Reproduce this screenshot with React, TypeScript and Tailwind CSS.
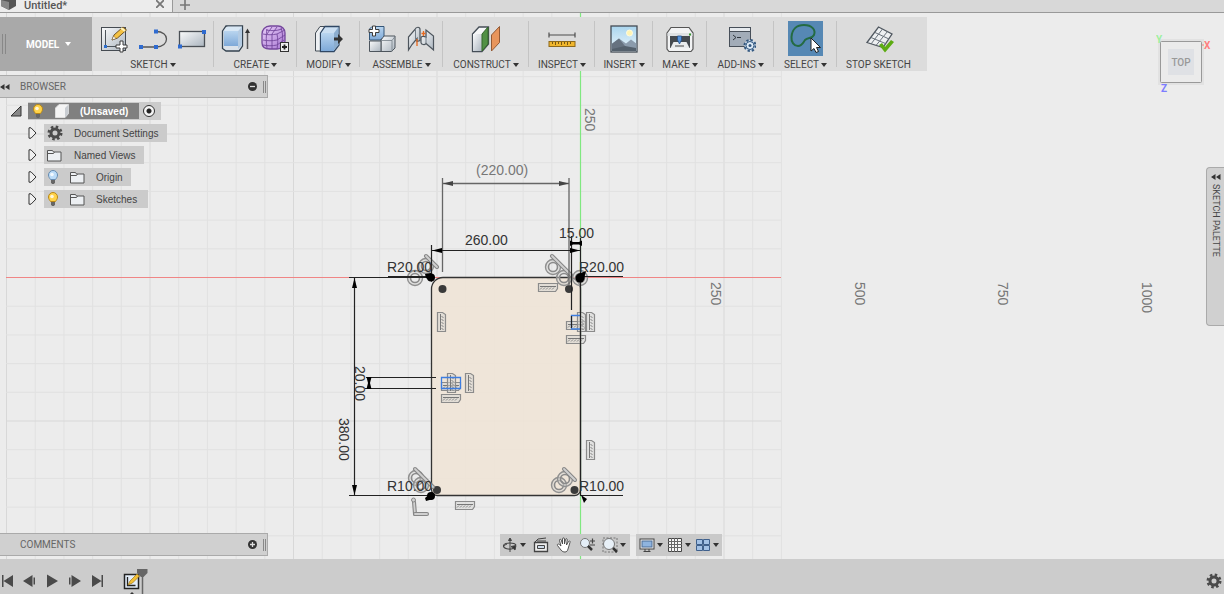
import type { ReactNode } from "react";

/* ---------- Toolbar icons (30 x 30) ---------- */

function Icon({ children }: { children: ReactNode }) {
  return (
    <svg viewBox="0 0 30 30" className="h-[30px] w-[30px] shrink-0" fill="none" aria-hidden="true">
      {children}
    </svg>
  );
}

function Shades() {
  return (
    <svg className="absolute h-0 w-0" aria-hidden="true">
      <defs>
        <linearGradient id="steel" x1="0" y1="0" x2="1" y2="1">
          <stop offset="0" stopColor="#fafbfc" />
          <stop offset="1" stopColor="#abb5bf" />
        </linearGradient>
        <linearGradient id="blue" x1="0" y1="0" x2="0" y2="1">
          <stop offset="0" stopColor="#b9d5ef" />
          <stop offset="1" stopColor="#7ea9d8" />
        </linearGradient>
        <linearGradient id="sky" x1="0" y1="0" x2="0" y2="1">
          <stop offset="0" stopColor="#a9d5ee" />
          <stop offset="1" stopColor="#edf6fb" />
        </linearGradient>
        <linearGradient id="purple" x1="0" y1="0" x2="1" y2="1">
          <stop offset="0" stopColor="#e7cdf8" />
          <stop offset="1" stopColor="#a978d3" />
        </linearGradient>
      </defs>
    </svg>
  );
}

function CreateSketchIcon() {
  return (
    <Icon>
      <rect x="2.500" y="3.500" width="24" height="23" fill="url(#steel)" stroke="#454b52" />
      <path d="M6.500 6v16.500h15" stroke="#4c535a" />
      <rect x="5" y="21" width="3" height="3" fill="#2e6fce" />
      <path d="M13 16l2-5 9-8 3.500 3-9 8z" fill="#f5c243" stroke="#70552a" />
      <path d="M13 16l1.500-4 2.500 2.500z" fill="#fff" stroke="#70552a" strokeWidth="0.500" />
      <path d="M22 4l4 3" stroke="#fff3bd" strokeWidth="2" />
      <path d="M21 17h3v4h4v3h-4v4h-3v-4h-4v-3h4z" fill="#fff" stroke="#3c3c3c" />
    </Icon>
  );
}

function LineIcon() {
  return (
    <Icon>
      <path d="M3 23h15c7 0 10.500-4 10.500-8S25 7.500 18 7.500" stroke="#555" strokeWidth="1.300" />
      <rect x="1" y="21" width="4" height="4" fill="#2f6bd0" />
      <rect x="16" y="21" width="4" height="4" fill="#2f6bd0" />
      <rect x="16" y="5.500" width="4" height="4" fill="#2f6bd0" />
    </Icon>
  );
}

function RectangleIcon() {
  return (
    <Icon>
      <rect x="2.500" y="7.500" width="25" height="15" fill="url(#steel)" stroke="#4a4f55" strokeWidth="1.300" />
      <rect x="1" y="20.500" width="4" height="4" fill="#2f6bd0" />
      <rect x="25" y="6" width="4" height="4" fill="#2f6bd0" />
    </Icon>
  );
}

function ExtrudeIcon() {
  return (
    <Icon>
      <path d="M1.500 7L5 2h16.500v20l-3.500 5H5l-3.500-2.500z" fill="#dce3ea" stroke="#33424f" strokeWidth="1.300" />
      <path d="M3 7h14v15H3z" fill="url(#blue)" />
      <path d="M17 7l4-4.500V21l-4 4z" fill="#b4cbe2" />
      <path d="M3 7l3.500-4.500H21L17 7z" fill="#d9e8f5" />
      <path d="M26.500 25V8" stroke="#555" strokeWidth="1.500" />
      <path d="M24 9l2.500-4.500L29 9z" fill="#333" />
    </Icon>
  );
}

function FormIcon() {
  return (
    <Icon>
      <path d="M2 10c0-4 3-8 8-8h8c4 0 7 3 7 7v8c0 5-4 8-8 8h-7c-5 0-8-2-8-6z" fill="url(#purple)" stroke="#74479c" strokeWidth="1.300" />
      <path d="M3 10c5 1 9 1 14 0l8-4M3 16c5 1 9 1 14 0l8-5M3 21c5 1 9 1 14 0l7-5M7 5c-1 6-1 13 0 19M12 10v15M17 10c1 5 1 10 0 15M21 4c2 5 2 11 0 18M6 6c6 1 10 1 16-1M12 10l5-7M7 10l5-7" stroke="#74479c" strokeWidth="0.900" />
      <rect x="20.500" y="18.500" width="8" height="9" fill="#eee" stroke="#333" />
      <path d="M24.500 20.500v5M22 23h5" stroke="#222" strokeWidth="1.800" />
    </Icon>
  );
}

function PressPullIcon() {
  return (
    <Icon>
      <path d="M1.500 9L6 2.500h6L7 9v18H1.500z" fill="#edf0f3" stroke="#454e57" />
      <path d="M6.500 9L11 2.500h14V21l-5 6.500H6.500z" fill="#cbdff2" stroke="#2f4764" strokeWidth="1.300" />
      <path d="M7 9h13v18H7z" fill="url(#blue)" />
      <path d="M20 9l4.500-6v18L20 26z" fill="#8caed0" />
      <path d="M20 13.500h4v-3.500l5 5-5 5v-3.500h-4z" fill="#333" />
    </Icon>
  );
}

function NewComponentIcon() {
  return (
    <Icon>
      <path d="M2.500 5L5 2.500h12V15h-3v1H2.500z" fill="url(#blue)" stroke="#345678" />
      <path d="M14 16l3-4h11v12l-3.500 3.500H14z" fill="url(#steel)" stroke="#4d555d" />
      <path d="M2.500 17h11.500v10.500H2.500z" fill="url(#steel)" stroke="#4d555d" />
      <path d="M14 16.500h11l3-4M25 16.500v11" stroke="#737d87" strokeWidth="0.800" />
      <path d="M5.500 2h3v3.500H12v3H8.500V12h-3V8.500H2v-3h3.500z" fill="#fff" stroke="#3c3c3c" />
    </Icon>
  );
}

function JointIcon() {
  return (
    <Icon>
      <path d="M2.500 13L9 5.500c1-3 5-3 5 0v11l-3 1v-3l-5 6-3.500 5.500z" fill="url(#steel)" stroke="#4d555d" strokeWidth="1.200" />
      <path d="M15 14c0-2 3-2 5-1V6l7.500 6v14L20 19.500c-1 2-5 1-5-1z" fill="url(#steel)" stroke="#4d555d" strokeWidth="1.200" />
      <path d="M9.500 6v9M20 7v12" stroke="#737d87" />
      <path d="M11 15v7M17.500 7v5M15.500 9.500h4" stroke="#e8681e" strokeWidth="1.300" />
    </Icon>
  );
}

function PlaneIcon() {
  return (
    <Icon>
      <path d="M1.500 10L8 3h9.500v17L11 27.500H1.500z" fill="#f6f7f8" stroke="#454e57" strokeWidth="1.300" />
      <path d="M2 10h9v17H2z" fill="url(#steel)" />
      <path d="M11 10l6-7v17l-6 7z" fill="#519044" stroke="#34662b" />
      <path d="M20.500 11l8-8.500v16l-8 8.500z" fill="#e8955c" stroke="#945a35" />
    </Icon>
  );
}

function MeasureIcon() {
  return (
    <Icon>
      <path d="M2 11h26M2 8.500v5M28 8.500v5" stroke="#4d4d4d" strokeWidth="1.200" />
      <rect x="2" y="17.500" width="26" height="5" fill="#f0b62d" stroke="#8d691b" />
      <path d="M5.500 18v2M8.500 18v3M11.500 18v2M14.500 18v3M17.500 18v2M20.500 18v3M23.500 18v2" stroke="#785812" />
    </Icon>
  );
}

function PictureIcon() {
  return (
    <Icon>
      <rect x="2" y="2" width="26" height="26" fill="url(#sky)" stroke="#444c55" strokeWidth="1.300" />
      <circle cx="20.500" cy="9" r="3" fill="#fff4b3" stroke="#fffbe0" />
      <path d="M2.700 20L10 14.500l7 5 5-4 5.300 4V27H2.700z" fill="#8b9bac" />
      <path d="M2.700 20L10 14.500l10 12.500H2.700z" fill="#667280" />
      <path d="M3 25l13-3 11 2v3H3z" fill="#54606c" />
    </Icon>
  );
}

function PrinterIcon() {
  return (
    <Icon>
      <path d="M2 9l4-5.500h18L28 9v16l-2 2.500H4L2 25z" fill="#f2f3f4" stroke="#555" strokeWidth="1.200" />
      <path d="M2.500 9h25v3h-25z" fill="#dfe2e4" />
      <rect x="5" y="12" width="20" height="12" fill="#444a50" />
      <path d="M8.500 18h13l3 6H5.500z" fill="#e9ecee" />
      <path d="M12.500 12h4v4l-2 4-2-4z" fill="#5694dc" stroke="#234f88" strokeWidth="0.800" />
      <path d="M10 22h9" stroke="#444" />
      <path d="M24 10.500h2" stroke="#3c9b32" strokeWidth="2" />
    </Icon>
  );
}

function ScriptIcon() {
  return (
    <Icon>
      <rect x="3.500" y="3.500" width="21" height="19" fill="#a2acb8" stroke="#474f59" />
      <path d="M4 4h20v3H4z" fill="#e6eaee" />
      <path d="M4 7.500h20" stroke="#474f59" />
      <path d="M7 11l3 2.500L7 16M11 13.500h4" stroke="#303840" />
      <circle cx="24" cy="21.500" r="5.500" fill="#cfe0f2" stroke="#32577f" strokeWidth="2" strokeDasharray="2.300 2" />
      <circle cx="24" cy="21.500" r="4" fill="#deebf7" stroke="#32577f" />
      <circle cx="24" cy="21.500" r="1.500" fill="#32577f" />
    </Icon>
  );
}

function SelectIcon() {
  return (
    <svg viewBox="0 0 35 35" className="h-[35px] w-[35px]" fill="none" aria-hidden="true">
      <path d="M3.500 16C4 8 9 4 16 4c8 0 12 5 10 10-2 4-6 2-9 5-2 3-3 6-7 6s-7-4-6.500-9z" stroke="#246b42" strokeWidth="2" />
      <path d="M23 17v13l3-2.500 2 4 2.500-1-2-4h4z" fill="#fff" stroke="#222" />
    </svg>
  );
}

function StopSketchIcon() {
  return (
    <Icon>
      <path d="M3 18.500L14.500 3 28 10 19 23.500z" fill="#eef0f2" stroke="#505860" strokeWidth="1.300" />
      <path d="M7 20L18.500 5M12 21.500L23.500 7.500M7 13.500l14.500 6M11 8.500l14 6.500" stroke="#69727b" />
      <path d="M15 21l3-2 3 4 6-7 3 2-9 10.500z" fill="#5cab12" />
    </Icon>
  );
}

/* ---------- Toolbar ---------- */

const GROUPS: { label: string; width: string; menu: boolean; icons: ReactNode[] }[] = [
  { label: "SKETCH", width: "w-[122px]", menu: true, icons: [<CreateSketchIcon />, <LineIcon />, <RectangleIcon />] },
  { label: "CREATE", width: "w-[83px]", menu: true, icons: [<ExtrudeIcon />, <FormIcon />] },
  { label: "MODIFY", width: "w-[63px]", menu: true, icons: [<PressPullIcon />] },
  { label: "ASSEMBLE", width: "w-[83px]", menu: true, icons: [<NewComponentIcon />, <JointIcon />] },
  { label: "CONSTRUCT", width: "w-[86px]", menu: true, icons: [<PlaneIcon />] },
  { label: "INSPECT", width: "w-[66px]", menu: true, icons: [<MeasureIcon />] },
  { label: "INSERT", width: "w-[58px]", menu: true, icons: [<PictureIcon />] },
  { label: "MAKE", width: "w-[54px]", menu: true, icons: [<PrinterIcon />] },
  { label: "ADD-INS", width: "w-[67px]", menu: true, icons: [<ScriptIcon />] },
  { label: "SELECT", width: "w-[63px]", menu: true, icons: [<SelectIcon />] },
  { label: "STOP SKETCH", width: "w-[83px]", menu: false, icons: [<StopSketchIcon />] },
];

function Caret({ light }: { light?: boolean }) {
  return (
    <svg viewBox="0 0 6 4" className="h-1 w-1.5 shrink-0" aria-hidden="true">
      <path d="M0 0h6L3 4z" fill={light ? "#fff" : "#333"} />
    </svg>
  );
}

function Toolbar() {
  return (
    <nav className="flex h-[54px] bg-[#dcdcdc] pr-[7px] font-[Roboto,sans-serif]" aria-label="Tools">
      <button className="flex w-[92px] items-center bg-[#a9a9a9] text-[10px] font-bold text-white">
        <span className="ml-[2px] h-5 w-1 border-x border-[#888]" />
        <span className="ml-5">MODEL</span>
        <span className="ml-1.5 flex">
          <Caret light />
        </span>
      </button>
      {GROUPS.map((group, i) => (
        <div key={group.label} className={`relative flex flex-col items-center pt-1 ${group.width}`}>
          <div className="flex h-[35px] items-center gap-[9px]">
            {group.icons.map((icon, n) => (
              <button
                key={n}
                aria-label={`${group.label} ${n + 1}`}
                className={group.label === "SELECT" ? "bg-[#5688b4]" : ""}
              >
                {icon}
              </button>
            ))}
          </div>
          <button className="mt-[3px] flex items-center gap-[2px] text-[10px] leading-3 whitespace-nowrap text-[#444]">
            {group.label}
            {group.menu && <Caret />}
          </button>
          {i < GROUPS.length - 1 && <span className="absolute top-1 right-0 h-[46px] w-px bg-[#c4c4c4]" />}
        </div>
      ))}
    </nav>
  );
}

/* ---------- Browser tree ---------- */

function Bulb({ on }: { on: boolean }) {
  return (
    <svg viewBox="0 0 12 14" className="h-3.5 w-3" aria-hidden="true">
      <path d="M3.500 9.500C2.500 8 1.500 7 1.500 5a4.500 4.500 0 019 0c0 2-1 3-2 4.500z" fill={on ? "#ffd34a" : "#bcdcf8"} stroke={on ? "#b98717" : "#668bb0"} />
      <circle cx="5" cy="4.500" r="1.800" fill="#fff" opacity="0.800" />
      <path d="M4 10h4v2.500L7 14H5l-1-1.500z" fill="#666" />
    </svg>
  );
}

function Folder() {
  return (
    <svg viewBox="0 0 15 13" className="h-[13px] w-[15px]" aria-hidden="true">
      <path d="M.5 12V1.500h5l1 1.500h7.500v9z" fill="#eceff2" stroke="#555" />
      <path d="M1 4.500h5.500l1-1.500" fill="none" stroke="#555" />
    </svg>
  );
}

function Gear() {
  return (
    <svg viewBox="0 0 16 16" className="h-4 w-4" fill="none" aria-hidden="true">
      <circle cx="8" cy="8" r="6" stroke="#4b4b4b" strokeWidth="3" strokeDasharray="2.400 2.310" />
      <circle cx="8" cy="8" r="4" stroke="#4b4b4b" strokeWidth="3" />
    </svg>
  );
}

function BodyIcon() {
  return (
    <svg viewBox="0 0 14 14" className="h-3.5 w-3.5" aria-hidden="true">
      <path d="M.5 4L4 .5h9.500v9L10 13.500H.5z" fill="#f4f4f4" stroke="#ddd" />
      <path d="M10 4l3.500-3.500v9L10 13.500z" fill="#c9cdd2" />
    </svg>
  );
}

const ROWS: { label: string; icons: ReactNode; gap: string }[] = [
  { label: "Document Settings", icons: <Gear />, gap: "gap-[11px] pr-2 pl-[3px]" },
  { label: "Named Views", icons: <Folder />, gap: "gap-[12px] pr-2 pl-[3px]" },
  { label: "Origin", icons: <><Bulb on={false} /><Folder /></>, gap: "gap-[11px] pr-2 pl-[3px]" },
  { label: "Sketches", icons: <><Bulb on /><Folder /></>, gap: "gap-[11px] pr-[11px] pl-[3px]" },
];

function PanelHeader({ title, collapse }: { title: string; collapse: boolean }) {
  return (
    <div className="flex h-[23px] w-[268px] items-center border border-l-0 border-[#aaa] bg-[#d0d0d0] pr-px font-[Roboto,sans-serif] text-[10px] text-[#666]">
      <span className="flex w-5">
        {collapse && (
          <svg viewBox="0 0 10 6" className="h-1.5 w-2.5" aria-hidden="true">
            <path d="M0 3l4.500-3v6zM5 3l4.500-3v6z" fill="#333" />
          </svg>
        )}
      </span>
      <h2>{title}</h2>
      <button className="ml-auto" aria-label={collapse ? "Collapse browser" : "Add comment"}>
        <svg viewBox="0 0 9 9" className="h-[9px] w-[9px]" aria-hidden="true">
          <circle cx="4.500" cy="4.500" r="4.500" fill="#333" />
          <path d={collapse ? "M2 4.500h5" : "M2 4.500h5M4.500 2v5"} stroke="#ddd" strokeWidth="1.300" />
        </svg>
      </button>
      <span className="ml-1.5 h-3 w-[3px] border-x border-[#888]" />
    </div>
  );
}

function Browser() {
  return (
    <section className="mt-1 text-[10px] text-[#444]">
      <PanelHeader title="BROWSER" collapse />
      <ul className="mt-1 flex flex-col gap-1">
        <li className="flex h-[18px] items-center pl-[10px]">
          <svg viewBox="0 0 12 12" className="h-3 w-3" aria-hidden="true">
            <path d="M1 11L11 1v10z" fill="#888" stroke="#333" />
          </svg>
          <div className="ml-1.5 flex h-[18px] items-center bg-[#cbcbcb] pr-1.5">
            <button className="flex h-4 items-center gap-[11px] bg-[#808080] pr-[11px] pl-1 font-bold text-white">
              <Bulb on />
              <BodyIcon />
              (Unsaved)
            </button>
            <input type="radio" name="active" defaultChecked aria-label="Activate component" className="ml-1 h-3 w-3 appearance-none rounded-full border border-[#333] bg-[radial-gradient(circle,#222_2px,#f4f4f4_3px)]" />
          </div>
        </li>
        {ROWS.map((row) => (
          <li key={row.label} className="flex h-[18px] items-center pl-7">
            <button aria-label={`Expand ${row.label}`}>
              <svg viewBox="0 0 9 12" className="h-3 w-[9px]" aria-hidden="true">
                <path d="M1 .8v10.400h2L8 6 3 .8z" fill="#f0f0f0" stroke="#333" />
              </svg>
            </button>
            <button className={`ml-[7px] flex h-[18px] items-center bg-[#cbcbcb] ${row.gap}`}>
              {row.icons}
              {row.label}
            </button>
          </li>
        ))}
      </ul>
    </section>
  );
}

/* ---------- Sketch canvas ---------- */

const STEP = 28.7;
const ORIGIN_X = 580.5;
const ORIGIN_Y = 277.5;

function Grid() {
  const columns = Array.from({ length: 28 }, (_, i) => i - 20);
  const rows = Array.from({ length: 20 }, (_, i) => i - 9);
  return (
    <g>
      {columns.map((n) => (
        <path key={n} d={`M${ORIGIN_X + n * STEP} 13V560`} stroke={n % 5 === 0 ? "#d8d8d8" : "#e1e1e1"} />
      ))}
      {rows.map((n) => (
        <path key={n} d={`M6 ${ORIGIN_Y + n * STEP}H781`} stroke={n % 5 === 0 ? "#d8d8d8" : "#e1e1e1"} />
      ))}
    </g>
  );
}

// Horizontal / vertical constraint glyph
function Comb({ x, y, vertical }: { x: number; y: number; vertical?: boolean }) {
  return (
    <g transform={vertical ? `translate(${x} ${y + 20}) rotate(-90)` : `translate(${x} ${y})`} fill="none">
      <path d="M.5.500h19v5l-2 3H.5z" fill="#d6d6d3" fillOpacity="0.500" stroke="#8b8b8b" strokeWidth="1.200" />
      <path d="M2 3.500h16" stroke="#777" />
      <path d="M4 4.500l-2 2M7 4.500l-2 2M10 4.500l-2 2M13 4.500l-2 2M16 4.500l-2 2" stroke="#858585" />
    </g>
  );
}

// Tangent constraint glyph
function Ring({ x, y }: { x: number; y: number }) {
  return (
    <g fill="none">
      <circle cx={x} cy={y} r="6" stroke="#d4d4d2" strokeWidth="3" opacity="0.500" />
      <circle cx={x} cy={y} r="7.500" stroke="#8f8f8f" strokeWidth="1.400" />
      <circle cx={x} cy={y} r="4.500" stroke="#8a8a8a" strokeWidth="1.600" />
    </g>
  );
}

function Bar({ d }: { d: string }) {
  return (
    <g fill="none" strokeLinecap="round">
      <path d={d} stroke="#868686" strokeWidth="4" />
      <path d={d} stroke="#d0d0d0" strokeWidth="1.800" />
    </g>
  );
}

const RULER = [
  { value: "250", x: 711, y: 282 },
  { value: "500", x: 855, y: 282 },
  { value: "750", x: 998, y: 282 },
  { value: "1000", x: 1142, y: 282 },
  { value: "250", x: 585, y: 108 },
];

const DOTS = [[442.5, 289], [569, 289], [437, 490], [574.5, 490]];

function Canvas() {
  return (
    <svg className="absolute inset-0 h-full w-full font-['Liberation_Sans',Arial,sans-serif] text-[14px]" fill="none" role="img" aria-label="Sketch">
      <Grid />
      <path d="M6 277.500H781" stroke="#f08585" strokeWidth="1.200" />
      <path d="M580.500 13V560" stroke="#80e880" strokeWidth="1.200" />

      {/* Profile */}
      <path
        d="M443 277.500H569a11.500 11.500 0 0 1 11.500 11.500V489.500a6 6 0 0 1-6 6H437.500a6 6 0 0 1-6-6V289a11.500 11.500 0 0 1 11.500-11.500z"
        fill="#f0e4d6"
        fillOpacity="0.850"
        stroke="#333"
        strokeWidth="1.300"
      />
      {DOTS.map(([x, y]) => (
        <circle key={`${x}-${y}`} cx={x} cy={y} r="4" fill="#3a3a3a" />
      ))}

      {/* Constraints */}
      <Ring x={426} y={266} />
      <Ring x={415} y={278} />
      <Bar d="M426 256l11 11" />
      <Ring x={553} y={267} />
      <Ring x={564} y={278} />
      <Ring x={580} y={278} />
      <Bar d="M552 256l19 19" />
      <Ring x={416} y={478} />
      <Ring x={421} y={485} />
      <Bar d="M415 469l18 18" />
      <Ring x={559} y={485} />
      <Ring x={565} y={479} />
      <Bar d="M564 469l11 11" />
      <Bar d="M414 502l1 12" />
      <Bar d="M415 514h12" />
      <circle cx="413.500" cy="500" r="2" fill="#d0d0d0" stroke="#868686" />
      <Comb x={538} y={283} />
      <Comb x={455} y={501} />
      <Comb x={441} y={394} />
      <Comb x={441} y={382} />
      <Comb x={566} y={335} />
      <Comb x={566} y={321} />
      <Comb x={447} y={373} vertical />
      <Comb x={465} y={373} vertical />
      <Comb x={437} y={312} vertical />
      <Comb x={577} y={312} vertical />
      <Comb x={586} y={312} vertical />
      <Comb x={586} y={440} vertical />
      <path d="M441.500 377.500h19v11h-19zM580 315.500h-8.500v13.500H580" stroke="#3d7de0" strokeWidth="1.300" />

      {/* Reference dimension */}
      <path d="M442.500 178V272M569 178V286M443 183.500H569" stroke="#666" strokeWidth="1.300" />
      <path d="M443 183.500l10-2.500v5zM569 183.500l-10-2.500v5z" fill="#444" />

      {/* Driving dimensions */}
      <g stroke="#222" strokeWidth="1.200">
        <path d="M431.500 245V278M432 250.500H580M580.500 238V496M571.500 236V310M571.500 316V328" />
        <path d="M349 277.500H431M388 276.500H431M580 276.500H623M349 495.500H431M580 495.500H623" />
        <path d="M354.500 278V495M366 377.500H436M365 388.500H436" />
      </g>
      <g fill="#000">
        <path d="M432 250.500l10-2.500v5zM580 250.500l-10-2.500v5z" />
        <path d="M354.500 278l-2.500 10h5zM354.500 495l-2.500-10h5z" />
        <path d="M570 240.500l3 1.500h6l3-1.500v5.500l-3-1.500h-6l-3 1.500z" />
        <path d="M366.500 377h5l-1.500 6 1.500 6h-5l1.500-6z" />
        <circle cx="431" cy="277.500" r="4" />
        <circle cx="580" cy="278" r="4.500" />
        <circle cx="431" cy="496" r="4" />
        <path d="M432 282l-6-4-1-4 6-1zM577 281l1-7 8-3-2 8zM432 492l-7 6 1 3 7-2zM581 495l6 4-3 4z" />
      </g>

      <g fill="#333">
        <text x="476" y="175" fill="#777">(220.00)</text>
        <text x="465" y="245">260.00</text>
        <text x="559" y="238">15.00</text>
        <text x="387" y="272">R20.00</text>
        <text x="579" y="272">R20.00</text>
        <text x="387" y="491">R10.00</text>
        <text x="579" y="491">R10.00</text>
        <text transform="translate(339 418) rotate(90)">380.00</text>
        <text transform="translate(355 366) rotate(90)">20.00</text>
      </g>
      <g fill="#777">
        {RULER.map((mark) => (
          <text key={`${mark.x}-${mark.y}`} transform={`translate(${mark.x} ${mark.y}) rotate(90)`}>
            {mark.value}
          </text>
        ))}
      </g>
    </svg>
  );
}

function ViewCube() {
  return (
    <svg viewBox="0 0 60 64" className="mr-2 h-16 w-[60px] font-[Roboto,sans-serif] font-bold" aria-label="View cube">
      <path d="M4.500 11.500h41v41h-41z" fill="#e9e9e9" stroke="#e2e2e2" strokeWidth="5" />
      <rect x="4.500" y="11.500" width="41" height="41" rx="1" fill="#ebebeb" stroke="#999" />
      <rect x="12" y="19" width="26" height="26" fill="#dfe1e5" />
      <text x="25" y="36" textAnchor="middle" fontSize="10" fontWeight="500" fill="#999">TOP</text>
      <text x="0" y="13" fontSize="10" fill="#9df09d">Y</text>
      <path d="M46 15h2" stroke="#ff8080" />
      <text x="48" y="19" fontSize="10" fill="#ff8080">X</text>
      <text x="5" y="62" fontSize="10" fill="#7d7dff">Z</text>
    </svg>
  );
}

function SketchPalette() {
  return (
    <button className="mt-[73px] flex h-[159px] w-[18px] flex-col items-center gap-1 rounded-l-sm border border-r-0 border-[#aaa] bg-[#d0d0d0] pt-1.5 font-[Roboto,sans-serif] text-[9px] text-[#444]">
      <svg viewBox="0 0 10 6" className="h-1.5 w-2.5 shrink-0" aria-hidden="true">
        <path d="M0 3l4.500-3v6zM5 3l4.500-3v6z" fill="#333" />
      </svg>
      <span className="leading-3 whitespace-nowrap [writing-mode:vertical-rl]">SKETCH PALETTE</span>
    </button>
  );
}

/* ---------- Navigation bar ---------- */

function NavIcon({ label, children, menu }: { label: string; children: ReactNode; menu?: boolean }) {
  return (
    <button aria-label={label} className="flex items-center gap-[2px]">
      <svg viewBox="0 0 16 16" className="h-4 w-4" fill="none" stroke="#444" aria-hidden="true">
        {children}
      </svg>
      {menu && <Caret />}
    </button>
  );
}

function NavBar() {
  return (
    <div className="flex gap-1.5">
      <div className="flex h-[22px] items-center gap-[7px] bg-[#c9c9c9] pr-1 pl-[2px]">
        <NavIcon label="Orbit" menu>
          <path d="M8 2v13M6.500 3.500L8 1l1.500 2.500z" fill="#444" />
          <path d="M11 11.500c-4 1.500-9.500 0-9.500-2.500s4-3 6.500-3 5 .5 6 2" strokeWidth="1.200" />
          <path d="M9 9.500l5-1-1 4.500zM1 9l4-2" fill="#333" />
        </NavIcon>
        <NavIcon label="Look at">
          <path d="M1.500 5.500h13v9h-13z" fill="#eee" strokeWidth="1.300" />
          <path d="M2 5l3-3 8-1M4 4h9" />
          <path d="M4.500 8.500h7v3h-7z" fill="#cfdbe8" />
        </NavIcon>
        <NavIcon label="Pan">
          <path d="M5 13L1.500 8.500c-.8-1 .8-2 1.800-1L5 9 3.500 3.500c-.3-1.500 1.300-1.700 1.700-.5L6.500 7V2c0-1.500 2-1.500 2 0v5l1-4.500c.4-1.300 2-1 1.700.5L10.500 8l2-3.500c.8-1 2-.4 1.500.8L12 12c-.5 2-1.500 3-3 3s-3-.5-4-2z" fill="#fff" strokeWidth="0.900" />
        </NavIcon>
        <NavIcon label="Zoom">
          <circle cx="6" cy="6" r="4.500" fill="#e4eef7" stroke="#777" />
          <path d="M9 9l4 4" stroke="#333" strokeWidth="2.500" />
          <path d="M11 4h5M13.500 1.500v5M11 8h5" strokeWidth="1.200" />
        </NavIcon>
        <NavIcon label="Fit" menu>
          <path d="M1 1h14v14H1z" strokeDasharray="2 1.500" stroke="#777" />
          <circle cx="7" cy="7" r="5.500" fill="#e8f0f7" stroke="#777" />
          <path d="M11 11l4 4" stroke="#333" strokeWidth="2.500" />
        </NavIcon>
      </div>
      <div className="flex h-[22px] items-center gap-1 bg-[#c9c9c9] px-[3px]">
        <NavIcon label="Display settings" menu>
          <rect x="1" y="2" width="14" height="10" fill="#eee" />
          <rect x="3" y="4" width="10" height="6" fill="#8fb4df" stroke="#4d6e98" />
          <path d="M6 12v2.500h4V12M4.500 14.500h7" />
        </NavIcon>
        <NavIcon label="Grid and snaps" menu>
          <path d="M1.500 1.500h13v13h-13z" fill="#f5f5f5" />
          <path d="M4.500 1v14M7.500 1v14M10.500 1v14M1 4.500h14M1 7.500h14M1 10.500h14" stroke="#666" />
        </NavIcon>
        <NavIcon label="Viewports" menu>
          <path d="M1.500 2.500h6v5h-6zM8.500 2.500h6v5h-6zM1.500 8.500h6v5h-6zM8.500 8.500h6v5h-6z" fill="#a3c1e5" stroke="#3f608c" />
        </NavIcon>
      </div>
    </div>
  );
}

/* ---------- Timeline ---------- */

const PLAYBACK = [
  { label: "First", d: "M2 2h1.500v12H2zM13 2v12L3.500 8z" },
  { label: "Previous", d: "M10.500 2v12L1 8zM11.500 4.500h1.500v7h-1.500z" },
  { label: "Play", d: "M3 1.500v13L14 8z" },
  { label: "Next", d: "M3 4.500h1.500v7H3zM5.500 2v12L15 8z" },
  { label: "Last", d: "M4 2v12l9.500-6zM13.500 2H15v12h-1.500z" },
];

function Timeline() {
  return (
    <footer className="relative flex h-[35px] items-center bg-[#cccccc] pt-2 pr-[2px]">
      <div className="flex gap-1.5">
        {PLAYBACK.map((item) => (
          <button key={item.label} aria-label={item.label}>
            <svg viewBox="0 0 16 16" className="h-4 w-4" aria-hidden="true">
              <path d={item.d} fill="#4a4a4a" />
            </svg>
          </button>
        ))}
      </div>
      <button className="ml-[19px]" aria-label="Sketch1">
        <svg viewBox="0 0 26 26" className="h-[26px] w-[26px]" fill="none" aria-hidden="true">
          <path d="M1.500 6.500h14v14h-14z" fill="#e3edf8" stroke="#222" strokeWidth="1.500" />
          <path d="M4.500 9v8.500h8" stroke="#222" strokeWidth="1.300" />
          <path d="M5 17l2-4 7-7 2.500 2-7 7z" fill="#f3bf36" stroke="#9b771b" strokeWidth="0.700" />
          <path d="M14 1h10.500v4l-4 4h-2.500l-4-4z" fill="#666" />
          <path d="M19.500 8v18" stroke="#666" strokeWidth="1.500" />
          <path d="M7 26l2-2 2 2z" fill="#333" />
        </svg>
      </button>
      <button className="ml-auto" aria-label="Timeline settings">
        <Gear />
      </button>
    </footer>
  );
}

export default function App() {
  return (
    <div className="relative flex min-h-screen flex-col overflow-hidden bg-[#ececec] font-['Liberation_Sans',Arial,sans-serif]">
      <Shades />
      <Canvas />
      <header className="relative flex h-[13px] border-b border-[#999] bg-[#d8d8d8]">
        <div className="flex h-3 w-[173px] items-start border-r border-[#999] bg-[#ececec] pl-px">
          <svg viewBox="0 0 16 11" className="h-[11px] w-4" aria-hidden="true">
            <path d="M0 0h15v6l-7 4-8-4z" fill="#555" />
            <path d="M0 0l8 2v8L0 6z" fill="#888" />
          </svg>
          <span className="ml-[7px] font-[Roboto,sans-serif] text-[11px] leading-3 font-medium text-[#555]">Untitled*</span>
          <button className="mr-2 ml-auto" aria-label="Close tab">
            <svg viewBox="0 0 8 8" className="h-2 w-2" aria-hidden="true">
              <path d="M0 0l8 8M8 0L0 8" stroke="#777" strokeWidth="1.800" />
            </svg>
          </button>
        </div>
        <button className="mb-1 ml-[7px]" aria-label="New tab">
          <svg viewBox="0 0 11 11" className="h-2.5 w-2.5" aria-hidden="true">
            <path d="M5.500 0v11M0 5.500h11" stroke="#777" strokeWidth="1.800" />
          </svg>
        </button>
      </header>
      <main className="relative flex flex-1 flex-col">
        <div className="flex flex-1 items-start justify-between">
          <div className="pt-1">
            <Toolbar />
            <Browser />
          </div>
          <div className="flex flex-col items-end pt-[17px]">
            <ViewCube />
            <SketchPalette />
          </div>
        </div>
        <div className="grid grid-cols-[1fr_auto_1fr] items-center pr-[3px] pb-[3px]">
          <PanelHeader title="COMMENTS" collapse={false} />
          <NavBar />
        </div>
      </main>
      <Timeline />
    </div>
  );
}
